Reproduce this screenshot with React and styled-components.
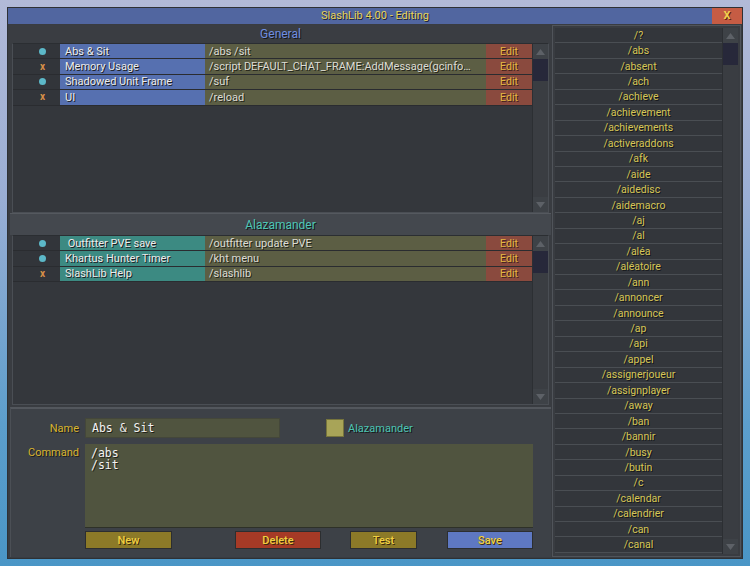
import React from "react";
import styled, { createGlobalStyle } from "styled-components";

const Global = createGlobalStyle`
  html, body { margin: 0; padding: 0; }
  body {
    width: 750px; height: 566px; overflow: hidden;
    background: linear-gradient(180deg, #b2bad8 0%, #9aaed4 35%, #5c9ecc 75%, #4a96c6 100%);
    font-family: Roboto, "Liberation Sans", sans-serif;
  }
`;

const Window = styled.div`
  margin: 8px;
  width: 734px;
  height: 550px;
  display: flex;
  flex-direction: column;
  background: #393c41;
  box-shadow: 0 0 0 1px #2e3135;
`;

const TitleBar = styled.div`
  height: 16px;
  display: grid;
  grid-template-columns: 30px 1fr 30px;
  align-items: stretch;
  background: #5166a0;
`;

const Title = styled.div`
  grid-column: 2;
  text-align: center;
  font-size: 11px;
  line-height: 16px;
  color: #e6d45c;
  text-shadow: 1px 1px 0 #1c2030;
`;

const Close = styled.div`
  background: #c65c44;
  color: #f0d050;
  font-size: 11px;
  font-weight: bold;
  line-height: 16px;
  text-align: center;
  text-shadow: 1px 1px 0 #602010;
`;

const Body = styled.div`
  flex: 1;
  display: flex;
  gap: 1px;
  padding: 1px 1px 1px 2px;
  min-height: 0;
`;

const LeftCol = styled.div`
  width: 541px;
  display: flex;
  flex-direction: column;
`;

const SectionHeader = styled.div`
  height: ${(p) => p.$h}px;
  display: flex;
  align-items: center;
  justify-content: center;
  font-size: 12px;
  color: ${(p) => p.$color};
  background: ${(p) => p.$bg};
  text-shadow: 1px 1px 0 #15171a;
  border-top: ${(p) => (p.$line ? "1px solid #55595f" : "none")};
`;

const ListBox = styled.div`
  height: 170px;
  margin: 0 2px;
  display: flex;
  background: #34373c;
  border: 1px solid #4a4e54;
  border-top-color: #2b2e32;
  box-sizing: border-box;
`;

const Rows = styled.div`
  flex: 1;
  display: flex;
  flex-direction: column;
`;

const Row = styled.div`
  height: 15.4px;
  display: grid;
  grid-template-columns: 47px 145px 281px 46px;
  border-bottom: 1px solid #2a2c30;
  box-sizing: border-box;
  font-size: 11px;
`;

const IconCell = styled.div`
  background: #32353a;
  display: flex;
  align-items: center;
  justify-content: flex-end;
  padding-right: 13px;
`;

const Dot = styled.span`
  width: 7px;
  height: 7px;
  border-radius: 50%;
  background: #5cb8c8;
  margin-right: 1px;
`;

const Cross = styled.span`
  color: #d89048;
  font-size: 10px;
  font-weight: bold;
  line-height: 1;
  margin-right: 2px;
`;

const NameCell = styled.div`
  background: ${(p) => p.$bg};
  color: #ececec;
  padding-left: 5px;
  display: flex;
  align-items: center;
  white-space: pre;
  text-shadow: 1px 1px 0 #1a1c22;
`;

const CmdCell = styled.div`
  background: #5c5e44;
  color: #dcdcd4;
  padding-left: 4px;
  display: flex;
  align-items: center;
  white-space: nowrap;
  overflow: hidden;
  text-shadow: 1px 1px 0 #24251a;
`;

const EditCell = styled.div`
  background: #8a4a3e;
  color: #e4b842;
  display: flex;
  align-items: center;
  justify-content: center;
  font-size: 10.5px;
  text-shadow: 1px 1px 0 #40201a;
`;

const Scroll = styled.div`
  width: 15px;
  display: flex;
  flex-direction: column;
  background: #3a3d42;
  border-left: 1px solid #2c2f33;
`;

const Arrow = styled.div`
  height: 15px;
  display: flex;
  align-items: center;
  justify-content: center;
  background: #3e4247;
`;

const Thumb = styled.div`
  height: 22px;
  background: #27283a;
`;

const Track = styled.div`
  flex: 1;
`;

const Tri = ({ down }) => (
  <svg width="9" height="6" viewBox="0 0 9 6">
    <polygon points={down ? "0,0 9,0 4.5,6" : "0,6 9,6 4.5,0"} fill="#5d6167" />
  </svg>
);

const ScrollBar = () => (
  <Scroll>
    <Arrow>
      <Tri />
    </Arrow>
    <Thumb />
    <Track />
    <Arrow>
      <Tri down />
    </Arrow>
  </Scroll>
);

const Editor = styled.div`
  flex: 1;
  margin-top: 2px;
  background: #3d4147;
  border-top: 2px solid #53575d;
  border-left: 1px solid #4b4f55;
  display: flex;
  flex-direction: column;
  padding: 9px 0 0 0;
`;

const FieldRow = styled.div`
  display: flex;
  align-items: ${(p) => (p.$top ? "flex-start" : "center")};
  margin-bottom: ${(p) => p.$mb || 0}px;
`;

const Label = styled.div`
  width: 68px;
  text-align: right;
  padding-right: 6px;
  font-size: 11px;
  color: #d8b430;
  text-shadow: 1px 1px 0 #1c1c18;
  padding-top: ${(p) => p.$pt || 0}px;
`;

const NameInput = styled.div`
  width: 187px;
  height: 18px;
  padding-left: 6px;
  background: #50543f;
  border: 1px solid #44473a;
  box-sizing: content-box;
  color: #f2f2f2;
  font-family: "DejaVu Sans Mono", "Liberation Mono", monospace;
  font-size: 11.5px;
  line-height: 18px;
  text-shadow: 1px 1px 0 #202018;
`;

const Swatch = styled.div`
  width: 16px;
  height: 16px;
  margin-left: 46px;
  background: #a8a458;
  border: 1px solid #76743c;
`;

const GroupName = styled.div`
  margin-left: 4px;
  font-size: 11px;
  color: #4cc4b4;
  text-shadow: 1px 1px 0 #151818;
`;

const CommandArea = styled.div`
  width: 442px;
  height: 80px;
  padding: 3px 0 0 6px;
  background: #50543f;
  border-bottom: 1px solid #2e3128;
  color: #f2f2f2;
  font-family: "DejaVu Sans Mono", "Liberation Mono", monospace;
  font-size: 11.5px;
  line-height: 12px;
  white-space: pre;
  text-shadow: 1px 1px 0 #202018;
`;

const Buttons = styled.div`
  display: flex;
  padding-left: 74px;
`;

const Btn = styled.div`
  width: ${(p) => p.$w}px;
  margin-left: ${(p) => p.$ml || 0}px;
  height: 18px;
  background: ${(p) => p.$bg};
  border: 1px solid #2c2e30;
  box-sizing: border-box;
  color: #f0d040;
  font-size: 11px;
  font-weight: 500;
  display: flex;
  align-items: center;
  justify-content: center;
  text-shadow: 1px 1px 0 #3a2a10;
`;

const RightPanel = styled.div`
  flex: 1;
  display: flex;
  padding: 2px;
  background: #393c41;
  border: 1px solid #50545a;
  box-sizing: border-box;
`;

const CmdList = styled.div`
  flex: 1;
  display: flex;
  flex-direction: column;
`;

const CmdItem = styled.div`
  height: 15.45px;
  box-sizing: border-box;
  background: #33363b;
  border-bottom: 1px solid #4a4e53;
  color: #d6c656;
  font-size: 10.5px;
  display: flex;
  align-items: center;
  justify-content: center;
  text-shadow: 1px 1px 0 #15171a;
`;

const general = [
  { icon: "dot", name: "Abs & Sit", cmd: "/abs /sit" },
  { icon: "x", name: "Memory Usage", cmd: "/script DEFAULT_CHAT_FRAME:AddMessage(gcinfo…" },
  { icon: "dot", name: "Shadowed Unit Frame", cmd: "/suf" },
  { icon: "x", name: "UI", cmd: "/reload" },
];

const alaz = [
  { icon: "dot", name: " Outfitter PVE save", cmd: "/outfitter update PVE" },
  { icon: "dot", name: "Khartus Hunter Timer", cmd: "/kht menu" },
  { icon: "x", name: "SlashLib Help", cmd: "/slashlib" },
];

const commands = [
  "/?", "/abs", "/absent", "/ach", "/achieve", "/achievement", "/achievements",
  "/activeraddons", "/afk", "/aide", "/aidedisc", "/aidemacro", "/aj", "/al",
  "/aléa", "/aléatoire", "/ann", "/annoncer", "/announce", "/ap", "/api", "/appel",
  "/assignerjoueur", "/assignplayer", "/away", "/ban", "/bannir", "/busy", "/butin",
  "/c", "/calendar", "/calendrier", "/can", "/canal",
];

const MacroList = ({ items, color }) => (
  <ListBox>
    <Rows>
      {items.map((it) => (
        <Row key={it.name}>
          <IconCell>{it.icon === "dot" ? <Dot /> : <Cross>x</Cross>}</IconCell>
          <NameCell $bg={color}>{it.name}</NameCell>
          <CmdCell>{it.cmd}</CmdCell>
          <EditCell>Edit</EditCell>
        </Row>
      ))}
    </Rows>
    <ScrollBar />
  </ListBox>
);

export default function App() {
  return (
    <>
      <Global />
      <Window>
        <TitleBar>
          <Title>SlashLib 4.00 - Editing</Title>
          <Close>X</Close>
        </TitleBar>
        <Body>
          <LeftCol>
            <SectionHeader $h={18} $color="#6f8ee0" $bg="#3a3d42">General</SectionHeader>
            <MacroList items={general} color="#5670b0" />
            <SectionHeader $h={21} $color="#4cc6b6" $bg="#44484e" $line>Alazamander</SectionHeader>
            <MacroList items={alaz} color="#3c8a82" />
            <Editor>
              <FieldRow $mb={6}>
                <Label>Name</Label>
                <NameInput>Abs &amp; Sit</NameInput>
                <Swatch />
                <GroupName>Alazamander</GroupName>
              </FieldRow>
              <FieldRow $top $mb={3}>
                <Label $pt={2}>Command</Label>
                <CommandArea>{"/abs\n/sit"}</CommandArea>
              </FieldRow>
              <Buttons>
                <Btn $w={87} $bg="#8c7a28">New</Btn>
                <Btn $w={86} $ml={63} $bg="#a63a26">Delete</Btn>
                <Btn $w={67} $ml={29} $bg="#8c7a28">Test</Btn>
                <Btn $w={86} $ml={30} $bg="#5e78c2">Save</Btn>
              </Buttons>
            </Editor>
          </LeftCol>
          <RightPanel>
            <CmdList>
              {commands.map((c) => (
                <CmdItem key={c}>{c}</CmdItem>
              ))}
            </CmdList>
            <ScrollBar />
          </RightPanel>
        </Body>
      </Window>
    </>
  );
}
